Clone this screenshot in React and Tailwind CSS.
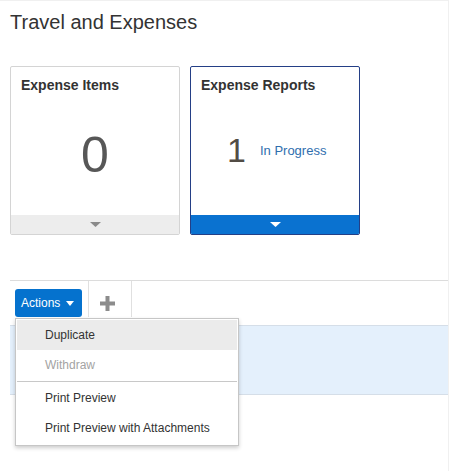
import React from "react";

function Tri({ color, w = 11, h = 6 }) {
  return (
    <svg width={w} height={h} viewBox={`0 0 ${w} ${h}`} className="block">
      <path d={`M0 0H${w}L${w / 2} ${h}Z`} fill={color} />
    </svg>
  );
}

export default function App() {
  return (
    <div
      className="relative w-[449px] h-[471px] bg-white border-t border-r border-[#f0f0f0] overflow-hidden text-[#333]"
      style={{ fontFamily: '"Liberation Sans", Arial, sans-serif' }}
    >
      <div className="pl-[10px] pt-[9px] text-[20px] leading-[24px] text-[#333]">Travel and Expenses</div>

      <div className="flex gap-[10px] pl-[10px] mt-[32px]">
        <div className="flex flex-col w-[170px] h-[169px] border border-[#d4d4d4] rounded-[2px] overflow-hidden bg-white">
          <div className="pl-[10px] pt-[10px] text-[14px] leading-[16px] font-bold text-[#333]">Expense Items</div>
          <div className="flex-1 flex items-center justify-center pt-[2px]">
            <span className="text-[50px] leading-[50px] text-[#575757]">0</span>
          </div>
          <div className="h-[19px] bg-[#ededed] flex items-center justify-center">
            <Tri color="#8a8a8a" w={11} h={5} />
          </div>
        </div>

        <div className="flex flex-col w-[170px] h-[169px] border border-[#243f86] rounded-[2px] overflow-hidden bg-white">
          <div className="pl-[10px] pt-[10px] text-[14px] leading-[16px] font-bold text-[#333]">Expense Reports</div>
          <div className="flex-1 flex items-center justify-start gap-[14px] pb-[8px] pl-[36px]">
            <span className="text-[34px] leading-[34px] text-[#524c45]">1</span>
            <span className="text-[13px] leading-[16px] text-[#2f6eae] pt-[2px]">In Progress</span>
          </div>
          <div className="h-[19px] bg-[#0a72d0] flex items-center justify-center">
            <Tri color="#ffffff" w={11} h={5} />
          </div>
        </div>
      </div>

      <div className="ml-[10px] mt-[45px] border-t border-[#dcdcdc]">
        <div className="flex h-[36px]">
          <div className="w-[79px] pl-[5px] pt-[8px] border-r border-[#e0e0e0]">
            <div className="h-[28px] w-[67px] rounded-[3px] bg-[#0572ce] flex items-center pl-[6px] gap-[6px] text-white text-[12px]">
              <span>Actions</span>
              <Tri color="#ffffff" w={8} h={5} />
            </div>
          </div>
          <div className="w-[43px] flex items-center justify-start pl-[11px] border-r border-[#e0e0e0] pt-[9px]">
            <svg width="15" height="15" viewBox="0 0 15 15">
              <rect x="5.5" y="0" width="4" height="15" fill="#8c8c8c" />
              <rect x="0" y="5.5" width="15" height="4" fill="#8c8c8c" />
            </svg>
          </div>
        </div>
        <div className="mt-[8px] h-[70px] bg-[#e4f0fc] border-t border-b border-[#d5dee8]" />
      </div>

      <div className="absolute left-[15px] top-[317px] w-[224px] bg-white border border-[#c6c6c6] shadow-[0_2px_4px_rgba(0,0,0,0.2)] p-[1px] text-[12px]">
        <div className="h-[30px] flex items-center pl-[28px] pb-[1px] bg-[#ebebeb] text-[#333]">Duplicate</div>
        <div className="h-[30px] flex items-center pl-[28px] pb-[1px] text-[#a3a3a3]">Withdraw</div>
        <div className="h-px bg-[#c8c8c8] my-[1px]" />
        <div className="h-[30px] flex items-center pl-[28px] pb-[1px] text-[#333]">Print Preview</div>
        <div className="h-[30px] flex items-center pl-[28px] pb-[1px] text-[#333]">Print Preview with Attachments</div>
        <div className="h-[1px]" />
      </div>
    </div>
  );
}
